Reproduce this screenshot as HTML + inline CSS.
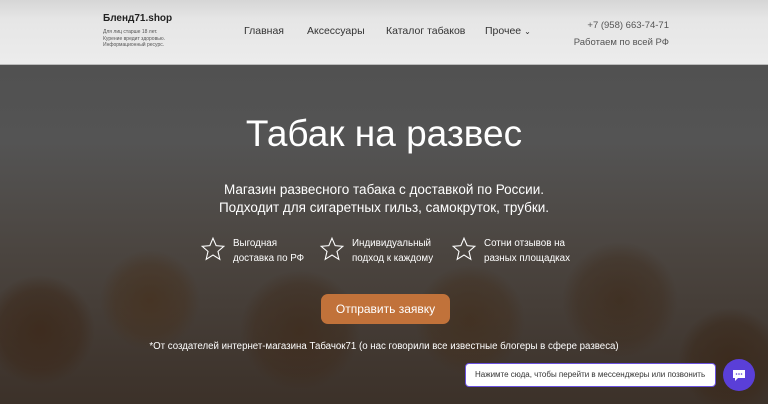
<!DOCTYPE html>
<html><head><meta charset="utf-8"><style>
*{margin:0;padding:0;box-sizing:border-box}
body{width:768px;height:404px;overflow:hidden;font-family:"Liberation Sans",sans-serif;position:relative;background:#444}
.hero{position:absolute;left:0;top:0;width:768px;height:404px;
background:
radial-gradient(circle at 40px 330px,rgba(60,40,25,.8) 0,rgba(60,40,25,.5) 40px,transparent 55px),
radial-gradient(circle at 150px 300px,rgba(70,48,28,.7) 0,rgba(70,48,28,.4) 35px,transparent 50px),
radial-gradient(circle at 300px 330px,rgba(62,42,26,.7) 0,rgba(62,42,26,.4) 45px,transparent 60px),
radial-gradient(circle at 470px 320px,rgba(66,46,28,.7) 0,rgba(66,46,28,.4) 40px,transparent 55px),
radial-gradient(circle at 620px 300px,rgba(62,43,27,.7) 0,rgba(62,43,27,.4) 42px,transparent 58px),
radial-gradient(circle at 730px 360px,rgba(58,40,25,.8) 0,rgba(58,40,25,.5) 38px,transparent 52px),
linear-gradient(180deg,#4e4e4e 0%,#545454 35%,#4b4540 62%,#3c3129 100%)}
.hdr{position:absolute;left:0;top:0;width:768px;height:65px;background:linear-gradient(180deg,#d6d6d6 0,#e6e6e6 30%,#ececec 100%);border-bottom:1px solid #bbb}
.logo{position:absolute;left:103px;top:13px;font-size:10px;font-weight:bold;color:#222}
.sub{position:absolute;left:103px;top:29px;font-size:5px;line-height:6.5px;color:#555}
.nav{position:absolute;top:25px;font-size:10.5px;color:#333}
.ph{position:absolute;left:560px;width:109px;top:17px;font-size:9.5px;color:#555;text-align:right;line-height:17px}
h1{position:absolute;left:0;width:768px;top:113px;text-align:center;color:#fff;font-weight:normal;font-size:37px}
.lead{position:absolute;left:0;width:768px;top:181px;text-align:center;color:#fff;font-size:13.5px;line-height:18px}
.f{position:absolute;top:236px;color:#fff;font-size:9.8px;line-height:15px}
.f svg{position:absolute;left:-33px;top:0}
.btn{position:absolute;left:321px;top:294px;width:129px;height:30px;background:#c1723a;border-radius:7px;color:#fff;font-size:12px;text-align:center;line-height:30px}
.note{position:absolute;left:0;width:768px;top:341px;text-align:center;color:#fff;font-size:9.7px}
.tip{position:absolute;left:465px;top:363px;width:251px;height:24px;background:#fff;border-radius:4px;border:1px solid #6a52e0;font-size:8px;color:#333;line-height:22px;padding-left:9px}
.chat{position:absolute;left:723px;top:359px;width:32px;height:32px;border-radius:50%;background:#5a3fd8}
</style></head><body>
<div class="hero"></div>
<div class="hdr">
<div class="logo">Бленд71.shop</div>
<div class="sub">Для лиц старше 18 лет.<br>Курение вредит здоровью.<br>Информационный ресурс.</div>
<div class="nav" style="left:244px">Главная</div>
<div class="nav" style="left:307px">Аксессуары</div>
<div class="nav" style="left:386px">Каталог табаков</div>
<div class="nav" style="left:485px">Прочее <span style="font-size:8px">⌄</span></div>
<div class="ph">+7 (958) 663-74-71<br>Работаем по всей РФ</div>
</div>
<h1>Табак на развес</h1>
<div class="lead">Магазин развесного табака с доставкой по России.<br>Подходит для сигаретных гильз, самокруток, трубки.</div>
<div class="f" style="left:233px"><svg width="26" height="26" viewBox="0 0 24 24"><path d="M12 2l2.9 6.9 7.1.6-5.4 4.7 1.7 7.3L12 17.6 5.7 21.5l1.7-7.3L2 9.5l7.1-.6z" fill="none" stroke="#fff" stroke-width="1"/></svg>Выгодная<br>доставка по РФ</div>
<div class="f" style="left:352px"><svg width="26" height="26" viewBox="0 0 24 24"><path d="M12 2l2.9 6.9 7.1.6-5.4 4.7 1.7 7.3L12 17.6 5.7 21.5l1.7-7.3L2 9.5l7.1-.6z" fill="none" stroke="#fff" stroke-width="1"/></svg>Индивидуальный<br>подход к каждому</div>
<div class="f" style="left:484px"><svg width="26" height="26" viewBox="0 0 24 24"><path d="M12 2l2.9 6.9 7.1.6-5.4 4.7 1.7 7.3L12 17.6 5.7 21.5l1.7-7.3L2 9.5l7.1-.6z" fill="none" stroke="#fff" stroke-width="1"/></svg>Сотни отзывов на<br>разных площадках</div>
<div class="btn">Отправить заявку</div>
<div class="note">*От создателей интернет-магазина Табачок71 (о нас говорили все известные блогеры в сфере развеса)</div>
<div class="tip">Нажимте сюда, чтобы перейти в мессенджеры или позвонить</div>
<div class="chat"><svg width="32" height="32" viewBox="0 0 32 32"><path d="M10 11h12v8h-7l-3 3v-3h-2z" fill="#fff"/><circle cx="13.5" cy="15" r=".8" fill="#5a3fd8"/><circle cx="16" cy="15" r=".8" fill="#5a3fd8"/><circle cx="18.5" cy="15" r=".8" fill="#5a3fd8"/></svg></div>
</body></html>
